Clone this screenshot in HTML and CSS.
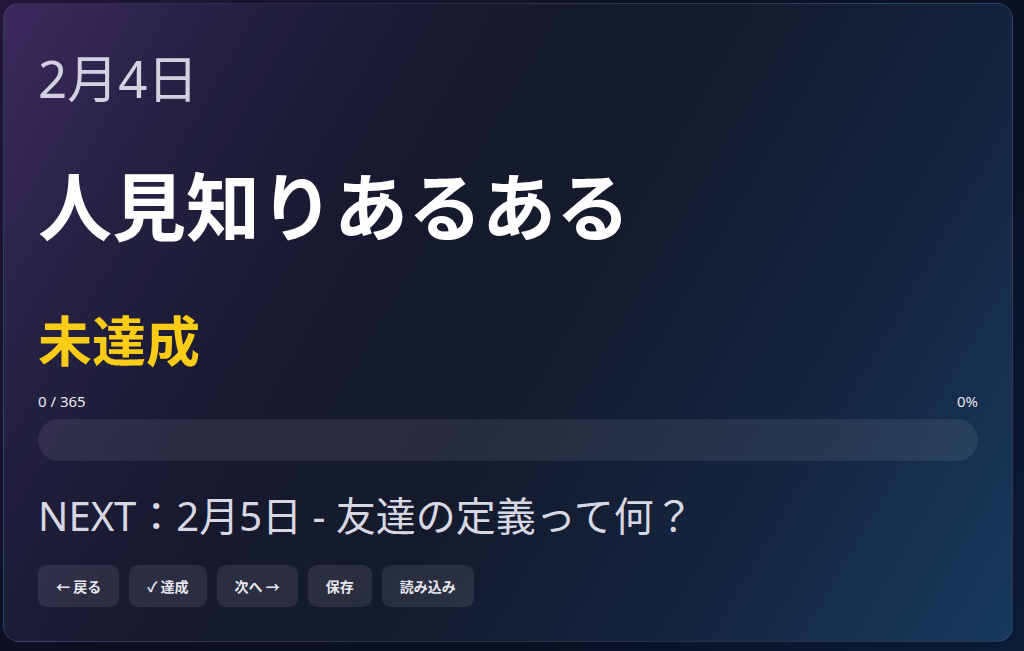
FILE: index.html
```html
<!DOCTYPE html>
<html lang="ja">
<head>
<meta charset="utf-8">
<title>365</title>
<link rel="stylesheet" href="styles.css">
</head>
<body>
<div class="page">
  <main class="card">
    <div class="date">2月4日</div>
    <h1 class="title">人見知りあるある</h1>
    <div class="status">未達成</div>
    <div class="count-row">
      <span>0 / 365</span>
      <span>0%</span>
    </div>
    <div class="bar"><div class="bar-fill" style="width:0%"></div></div>
    <div class="next">NEXT：2月5日 - 友達の定義って何？</div>
    <div class="actions">
      <button class="btn">← 戻る</button>
      <button class="btn">✓ 達成</button>
      <button class="btn">次へ →</button>
      <button class="btn">保存</button>
      <button class="btn">読み込み</button>
    </div>
  </main>
</div>
</body>
</html>
```

FILE: styles.css
```css
* { box-sizing: border-box; }
html, body {
  margin: 0;
  height: 100%;
}
body {
  font-family: "Noto Sans CJK JP", "Noto Sans", sans-serif;
  background: linear-gradient(135deg, #22173a 0%, #0d1022 40%, #0a1124 70%, #0a1c36 100%);
  color: #e6e6ee;
  overflow: hidden;
}
.page {
  padding: 3px 11px 9px 3px;
  height: 100%;
}
.card {
  height: 639px;
  border-radius: 16px;
  border: 1px solid rgba(255, 255, 255, 0.09);
  background: linear-gradient(120deg, #3c2b5e 0%, #252143 16%, #181a30 32%, #141a2b 52%, #152540 76%, #183a5e 100%);
  padding: 44px 34px 34px;
  display: flex;
  flex-direction: column;
}
.date {
  font-family: "Noto Sans", "Noto Sans CJK JP", sans-serif;
  font-size: 51px;
  line-height: 60px;
  color: #d3d0e2;
  font-weight: 400;
}
.title {
  margin: 52px 0 0;
  font-size: 74px;
  line-height: 86px;
  font-weight: 700;
  color: #ffffff;
}
.status {
  margin-top: 62px;
  font-size: 54px;
  line-height: 62px;
  font-weight: 700;
  color: #facc15;
}
.count-row {
  margin-top: 21px;
  display: flex;
  justify-content: space-between;
  font-family: "Noto Sans", "Noto Sans CJK JP", sans-serif;
  font-size: 15px;
  line-height: 20px;
  color: #e8e8f0;
}
.bar {
  margin-top: 8px;
  height: 42px;
  border-radius: 21px;
  background: rgba(255, 255, 255, 0.08);
  overflow: hidden;
}
.bar-fill {
  height: 100%;
  background: #facc15;
}
.next {
  margin-top: 32px;
  font-family: "Noto Sans", "Noto Sans CJK JP", sans-serif;
  font-size: 40px;
  line-height: 46px;
  color: #d8d8e2;
}
.actions {
  margin-top: 26px;
  display: flex;
  gap: 10px;
}
.btn {
  height: 42px;
  padding: 0 18px;
  border: none;
  border-radius: 9px;
  background: rgba(255, 255, 255, 0.09);
  color: #e8e8f0;
  font-family: inherit;
  font-size: 14px;
  font-weight: 700;
}
```
